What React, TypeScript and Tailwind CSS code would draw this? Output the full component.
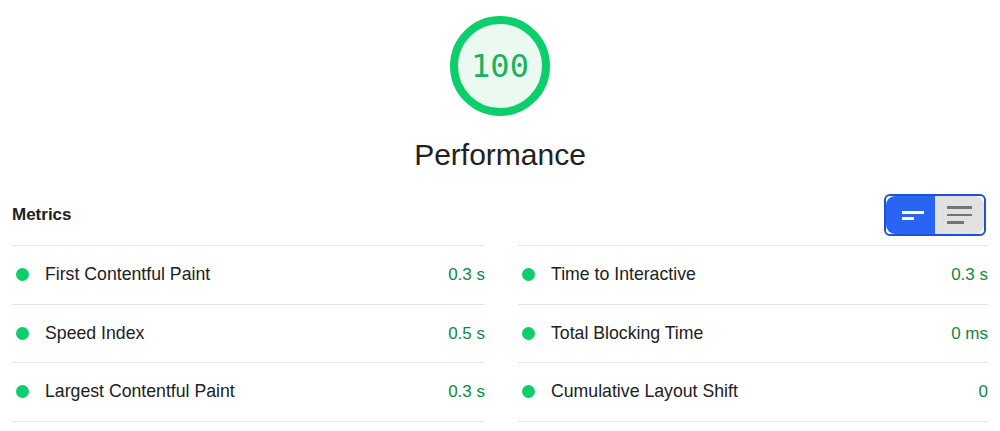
import React from 'react'

const metrics = [
  [
    { label: 'First Contentful Paint', value: '0.3 s' },
    { label: 'Speed Index', value: '0.5 s' },
    { label: 'Largest Contentful Paint', value: '0.3 s' },
  ],
  [
    { label: 'Time to Interactive', value: '0.3 s' },
    { label: 'Total Blocking Time', value: '0 ms' },
    { label: 'Cumulative Layout Shift', value: '0' },
  ],
]

const MetricColumn = ({ items }: { items: { label: string; value: string }[] }) => (
  <div className="flex flex-col border-t border-[#e4e4e4]">
    {items.map((m) => (
      <div
        key={m.label}
        className="flex h-[58.5px] items-center border-b border-[#e4e4e4] pl-[4px]"
      >
        <span className="h-[13px] w-[13px] rounded-full bg-[#0cce6b]" />
        <span className="ml-[16px] flex-1 text-[17.7px] text-[#212121]">{m.label}</span>
        <span className="text-[17px] text-[#0d8a3b]">{m.value}</span>
      </div>
    ))}
  </div>
)

const App = () => {
  return (
    <div className="h-[431px] w-[1000px] overflow-hidden bg-white font-['Liberation_Sans',Arial,sans-serif]">
      <div className="flex flex-col items-center">
        <div className="mt-[16px] flex h-[100px] w-[100px] items-center justify-center rounded-full border-[8px] border-[#0cce6b] bg-[#eafaf1]">
          <span className="font-['DejaVu_Sans_Mono',monospace] text-[32px] leading-none text-[#1ab35b]">
            100
          </span>
        </div>
        <h1 className="mt-[21px] text-[30px] leading-[36px] text-[#212121]">Performance</h1>
      </div>

      <div className="mt-[21px] pl-[12px] pr-[12px]">
        <div className="flex h-[42px] items-center justify-between">
          <span className="text-[17px] font-bold text-[#212121]">Metrics</span>
          <div className="mr-[2px] flex h-[42px] w-[102px] overflow-hidden rounded-[6px] border-2 border-[#1f52d3] bg-white">
            <div className="flex w-[49px] flex-col justify-center gap-[3px] rounded-l-[9px] bg-[#2a64f2] pl-[16px]">
              <span className="h-[3px] w-[22px] bg-white" />
              <span className="h-[3px] w-[12px] bg-white" />
            </div>
            <div className="flex flex-1 flex-col justify-center gap-[5px] rounded-r-[9px] bg-[#e1e1e1] pl-[12px]">
              <span className="h-[2.5px] w-[25px] bg-[#737373]" />
              <span className="h-[2.5px] w-[25px] bg-[#737373]" />
              <span className="h-[2.5px] w-[17px] bg-[#737373]" />
            </div>
          </div>
        </div>

        <div className="mt-[9px] grid grid-cols-[473px_1fr] gap-x-[33px]">
          <MetricColumn items={metrics[0]} />
          <MetricColumn items={metrics[1]} />
        </div>
      </div>
    </div>
  )
}

export default App
